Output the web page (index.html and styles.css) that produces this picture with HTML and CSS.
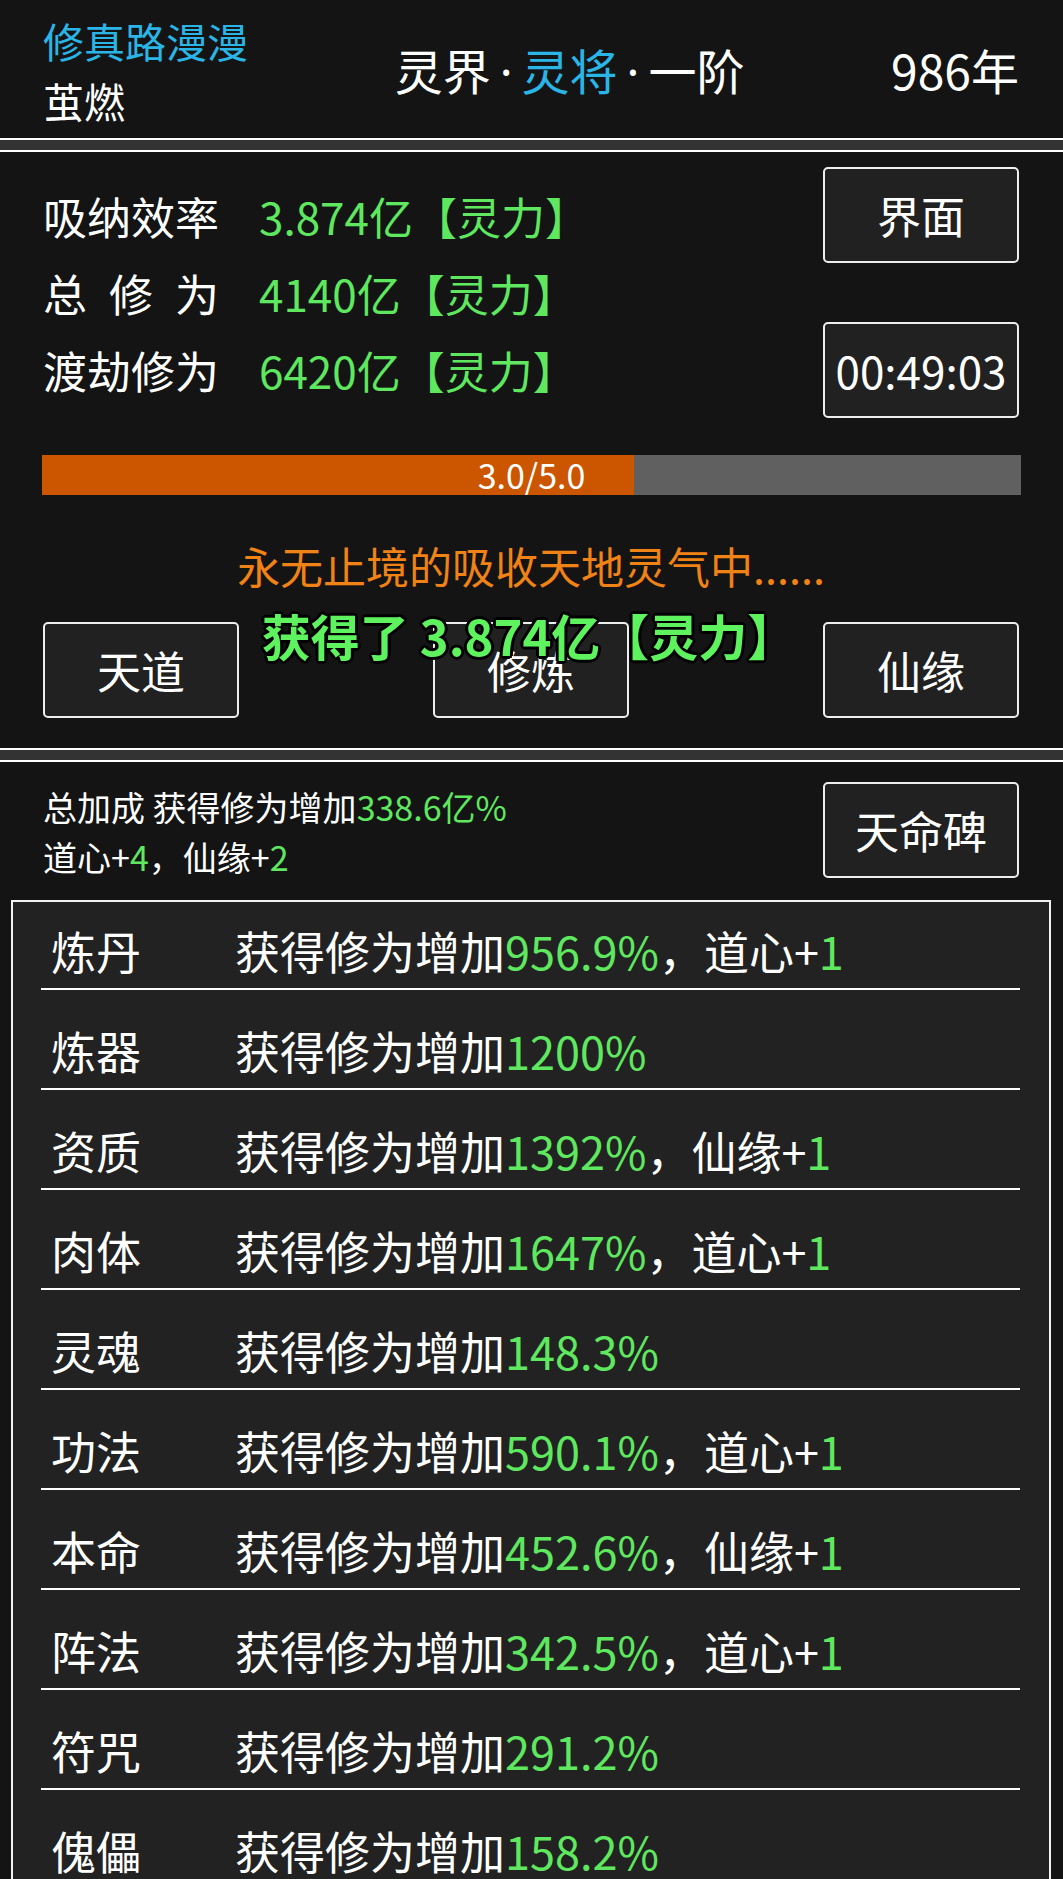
FILE: index.html
```html
<!DOCTYPE html>
<html lang="zh-CN">
<head>
  <meta charset="UTF-8" />
  <title>修真路漫漫</title>
  <link rel="stylesheet" href="styles.css">
</head>
<body>
  <div class="page">
    <!-- ヘッダー -->
    <div class="header">
      <div class="header-left">
        <div class="game-title">修真路漫漫</div>
        <div class="player-name">茧燃</div>
      </div>
      <div class="realm">灵界<span class="dot">·</span><span class="cyan">灵将</span><span class="dot">·</span>一阶</div>
      <div class="age">986年</div>
    </div>
    <div class="divider"></div>

    <!-- 修为ステータス -->
    <div class="status">
      <div class="status-top">
        <div class="stats">
          <div class="stat-row"><span class="stat-label">吸纳效率</span><span class="green">3.874亿【灵力】</span></div>
          <div class="stat-row"><span class="stat-label">总 修 为</span><span class="green">4140亿【灵力】</span></div>
          <div class="stat-row"><span class="stat-label">渡劫修为</span><span class="green">6420亿【灵力】</span></div>
        </div>
        <div class="side-buttons">
          <button type="button" class="btn">界面</button>
          <button type="button" class="btn">00:49:03</button>
        </div>
      </div>

      <div class="bar">
        <div class="bar-fill" style="width: 60.5%;"></div>
        <span class="bar-text">3.0/5.0</span>
      </div>

      <div class="message">永无止境的吸收天地灵气中......</div>

      <div class="actions">
        <button type="button" class="btn">天道</button>
        <button type="button" class="btn">修炼</button>
        <button type="button" class="btn">仙缘</button>
        <!-- 獲得ポップアップ -->
        <div class="gain-popup">获得了 3.874亿【灵力】</div>
      </div>
    </div>
    <div class="divider"></div>

    <!-- 総加成 -->
    <div class="summary">
      <div class="summary-text">
        <div>总加成 获得修为增加<span class="green">338.6亿%</span></div>
        <div>道心+<span class="green">4</span>，仙缘+<span class="green">2</span></div>
      </div>
      <button type="button" class="btn">天命碑</button>
    </div>

    <!-- 加成一覧 -->
    <div class="bonus-list">
      <div class="bonus-row"><span class="bonus-name">炼丹</span><span>获得修为增加<span class="green">956.9%</span>，道心+<span class="green">1</span></span></div>
      <div class="bonus-row"><span class="bonus-name">炼器</span><span>获得修为增加<span class="green">1200%</span></span></div>
      <div class="bonus-row"><span class="bonus-name">资质</span><span>获得修为增加<span class="green">1392%</span>，仙缘+<span class="green">1</span></span></div>
      <div class="bonus-row"><span class="bonus-name">肉体</span><span>获得修为增加<span class="green">1647%</span>，道心+<span class="green">1</span></span></div>
      <div class="bonus-row"><span class="bonus-name">灵魂</span><span>获得修为增加<span class="green">148.3%</span></span></div>
      <div class="bonus-row"><span class="bonus-name">功法</span><span>获得修为增加<span class="green">590.1%</span>，道心+<span class="green">1</span></span></div>
      <div class="bonus-row"><span class="bonus-name">本命</span><span>获得修为增加<span class="green">452.6%</span>，仙缘+<span class="green">1</span></span></div>
      <div class="bonus-row"><span class="bonus-name">阵法</span><span>获得修为增加<span class="green">342.5%</span>，道心+<span class="green">1</span></span></div>
      <div class="bonus-row"><span class="bonus-name">符咒</span><span>获得修为增加<span class="green">291.2%</span></span></div>
      <div class="bonus-row"><span class="bonus-name">傀儡</span><span>获得修为增加<span class="green">158.2%</span></span></div>
    </div>
  </div>
</body>
</html>
```

FILE: styles.css
```css
body {
  margin: 0;
  background: #141414;
  color: #fff;
  font-family: "Noto Sans CJK SC", "Noto Sans", sans-serif;
}
.page {
  width: 1063px;
}
.green {
  color: #5fe85f;
}
.cyan {
  color: #2bb5e6;
}

/* ヘッダー */
.header {
  height: 138px;
  box-sizing: border-box;
  padding: 0 44px 0 43px;
  display: flex;
  justify-content: space-between;
  align-items: center;
}
.header-left {
  align-self: flex-start;
  padding-top: 10px;
}
.game-title {
  color: #2bb5e6;
  font-size: 41px;
  line-height: 60px;
}
.player-name {
  font-size: 41px;
  line-height: 60px;
}
.realm,
.age {
  font-size: 48px;
}
/* 中黒は幅の狭い欧文フォントで */
.dot {
  font-family: "Noto Sans", sans-serif;
  margin: 0 9px;
}

/* 区切り線 */
.divider {
  height: 10px;
  background: #333;
  border-top: 2px solid #fff;
  border-bottom: 2px solid #fff;
}

/* ボタン共通 */
.btn {
  width: 196px;
  height: 96px;
  box-sizing: border-box;
  padding: 0;
  border: 2px solid #eee;
  border-radius: 5px;
  background: #212121;
  color: #fff;
  font-family: inherit;
  font-size: 44px;
  line-height: 1;
}

/* ステータス */
.status {
  padding: 15px 44px 30px 43px;
}
.status-top {
  display: flex;
  justify-content: space-between;
}
.stats {
  padding-top: 11px;
}
.stat-row {
  height: 77px;
  line-height: 77px;
  font-size: 44px;
}
.stat-label {
  display: inline-block;
  width: 176px;
  margin-right: 40px;
  text-align: justify;
  text-align-last: justify;
}
.side-buttons {
  display: flex;
  flex-direction: column;
  gap: 59px;
}

/* プログレスバー */
.bar {
  position: relative;
  height: 40px;
  margin: 37px -2px 0 -1px;
  background: #606060;
}
.bar-fill {
  height: 100%;
  background: #cc5500;
}
.bar-text {
  position: absolute;
  left: 0;
  right: 0;
  top: 0;
  text-align: center;
  font-size: 34px;
  line-height: 40px;
}

.message {
  margin-top: 45px;
  text-align: center;
  color: #f08216;
  font-size: 43px;
  line-height: 50px;
}
.actions {
  position: relative;
  margin-top: 32px;
  display: flex;
  justify-content: space-between;
}
.gain-popup {
  position: absolute;
  left: 0;
  right: 4px;
  top: -17px;
  text-align: center;
  color: #5ef25e;
  font-size: 49px;
  font-weight: bold;
  line-height: 60px;
  pointer-events: none;
  text-shadow:
    -2px -2px 0 #000, 2px -2px 0 #000, -2px 2px 0 #000, 2px 2px 0 #000,
    0 -3px 0 #000, 0 3px 0 #000, -3px 0 0 #000, 3px 0 0 #000;
}

/* 総加成 */
.summary {
  padding: 20px 44px 0 43px;
  display: flex;
  justify-content: space-between;
  align-items: flex-start;
}
.summary-text {
  font-size: 34px;
  line-height: 50px;
}

/* 加成一覧 */
.bonus-list {
  margin: 18px 12px 0 11px;
  padding: 0 29px 0 28px;
  border: 2px solid #f2f2f2;
  background: #222;
}
.bonus-row {
  height: 88px;
  box-sizing: border-box;
  padding: 10px 0 0 10px;
  border-bottom: 2px solid #fff;
  display: flex;
  align-items: center;
  font-size: 45px;
}
.bonus-row + .bonus-row {
  margin-top: 12px;
}
.bonus-name {
  width: 184px;
}
```
